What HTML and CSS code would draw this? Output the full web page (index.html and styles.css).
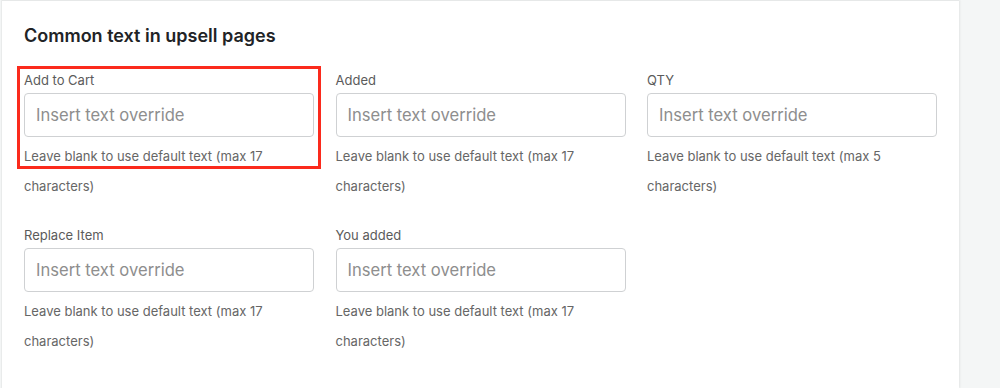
FILE: index.html
```html
<!DOCTYPE html>
<html lang="en">
<head>
<meta charset="utf-8">
<title>Common text in upsell pages</title>
<link rel="stylesheet" href="styles.css">
</head>
<body>
<div class="page">
  <section class="card">
    <h2 class="card-title">Common text in upsell pages</h2>
    <div class="grid">
      <div class="field highlighted">
        <label class="label">Add to Cart</label>
        <input class="input" type="text" placeholder="Insert text override">
        <p class="help">Leave blank to use default text (max 17 characters)</p>
        <span class="annot"></span>
      </div>
      <div class="field">
        <label class="label">Added</label>
        <input class="input" type="text" placeholder="Insert text override">
        <p class="help">Leave blank to use default text (max 17 characters)</p>
      </div>
      <div class="field">
        <label class="label">QTY</label>
        <input class="input" type="text" placeholder="Insert text override">
        <p class="help">Leave blank to use default text (max 5 characters)</p>
      </div>
      <div class="field">
        <label class="label">Replace Item</label>
        <input class="input" type="text" placeholder="Insert text override">
        <p class="help">Leave blank to use default text (max 17 characters)</p>
      </div>
      <div class="field">
        <label class="label">You added</label>
        <input class="input" type="text" placeholder="Insert text override">
        <p class="help">Leave blank to use default text (max 17 characters)</p>
      </div>
    </div>
  </section>
</div>
</body>
</html>
```
FILE: styles.css
```css
html, body {
  margin: 0;
  padding: 0;
  background: #f4f6f6;
  font-family: Inter, "Liberation Sans", Arial, sans-serif;
}
.page {
  display: flex;
  min-height: 388px;
  padding-left: 2px;
}
.card {
  width: 957px;
  box-sizing: border-box;
  background: #ffffff;
  border-top: 1px solid #e6e8e8;
  box-shadow: 1px 0 2px rgba(0, 0, 0, 0.07), -1px 0 1px rgba(0, 0, 0, 0.04);
  padding: 23px 22px 20px;
}
.card-title {
  margin: 0;
  font-size: 18px;
  line-height: 24px;
  font-weight: 600;
  color: #212326;
}
.grid {
  margin-top: 22px;
  display: grid;
  grid-template-columns: repeat(3, 290px);
  column-gap: 21.5px;
  row-gap: 24px;
}
.field {
  position: relative;
  display: flex;
  flex-direction: column;
}
.label {
  font-size: 13px;
  line-height: 20px;
  color: #5b5b5b;
  margin-bottom: 3px;
}
.input {
  box-sizing: border-box;
  width: 290px;
  height: 44px;
  margin: 0;
  border: 1px solid #cfd1d3;
  border-radius: 4px;
  padding: 0 11px;
  font-family: inherit;
  font-size: 16.6px;
  color: #212326;
  background: #fff;
  outline: none;
}
.input::placeholder {
  color: #8e8e8e;
}
.help {
  margin: 4px 0 0;
  font-size: 13px;
  line-height: 30px;
  color: #666666;
  width: 280px;
}
.annot {
  position: absolute;
  left: -7px;
  top: -4px;
  width: 304px;
  height: 103px;
  box-sizing: border-box;
  border: 3px solid #fb2a1c;
  pointer-events: none;
}
```
